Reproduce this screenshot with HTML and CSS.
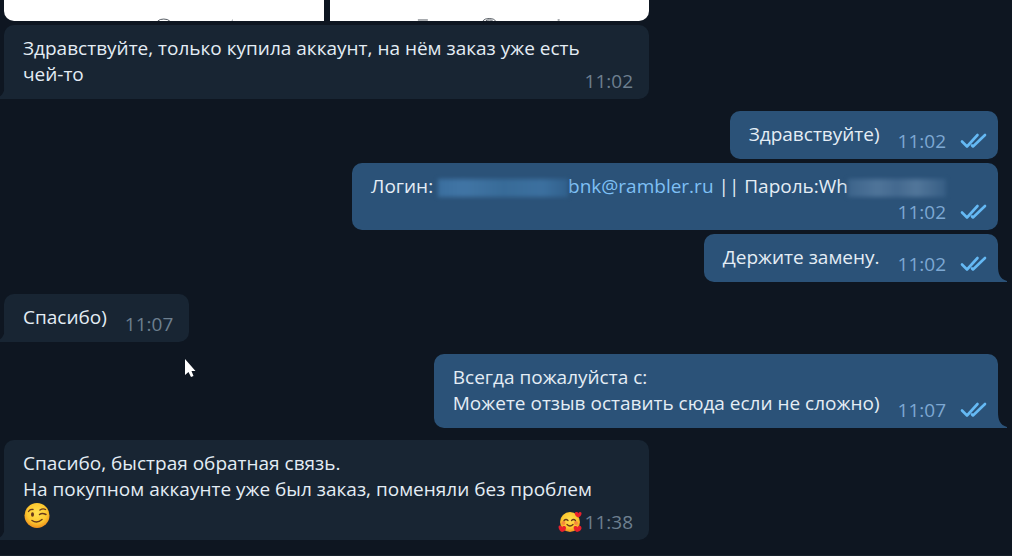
FILE: index.html
```html
<!DOCTYPE html>
<html lang="ru">
<head>
<meta charset="utf-8">
<meta name="viewport" content="width=device-width, initial-scale=1">
<title>Чат</title>
<link rel="stylesheet" href="styles.css">
</head>
<body>
<svg class="defs" aria-hidden="true">
  <defs>
    <symbol id="read" viewBox="0 0 28 16">
      <path d="M2 8.500l5 5L17.500 2M12 12.500l1 1L25 2" fill="none" stroke="#65b9f4" stroke-width="2.6" stroke-linecap="round" stroke-linejoin="round"/>
    </symbol>
    <symbol id="tail" viewBox="0 0 9 16">
      <path d="M0 0C0 8 2 13 9 15V16H0Z" fill="currentColor"/>
    </symbol>
    <radialGradient id="face" cx=".5" cy=".4" r=".6">
      <stop offset="0" stop-color="#ffe050"/>
      <stop offset=".65" stop-color="#fdc82f"/>
      <stop offset="1" stop-color="#ee8f1c"/>
    </radialGradient>
  </defs>
</svg>
<main class="chat">
  <div class="album">
    <div class="photo">
      <svg viewBox="0 0 320 21" class="sliver"><path d="M154 21a7 4 0 0 1 12 0M228 21l1-1" /></svg>
    </div>
    <div class="photo photo-last">
      <svg viewBox="0 0 320 21" class="sliver"><path d="M88 20h10M153 21a7 4 0 0 1 13 0M156 21a4 2 0 0 1 7 0M228 20h2" /></svg>
    </div>
  </div>

  <article class="bubble in wide tailed">
    <p class="text">Здравствуйте, только купила аккаунт, на нём заказ уже есть чей-то</p>
    <div class="meta"><time>11:02</time></div>
    <svg class="tail"><use href="#tail"/></svg>
  </article>

  <article class="bubble out group-start">
    <p class="text">Здравствуйте)</p>
    <div class="meta"><time>11:02</time><svg class="read"><use href="#read"/></svg></div>
  </article>
  <article class="bubble out stacked">
    <p class="text">Логин: <a href="#mail"><span class="hidden-login"></span>bnk@rambler.ru</a> || Пароль:Wh<span class="hidden-pass"></span></p>
    <div class="meta"><time>11:02</time><svg class="read"><use href="#read"/></svg></div>
  </article>
  <article class="bubble out tailed">
    <p class="text">Держите замену.</p>
    <div class="meta"><time>11:02</time><svg class="read"><use href="#read"/></svg></div>
    <svg class="tail"><use href="#tail"/></svg>
  </article>

  <article class="bubble in group-start tailed">
    <p class="text">Спасибо)</p>
    <div class="meta"><time>11:07</time></div>
    <svg class="tail"><use href="#tail"/></svg>
  </article>

  <article class="bubble out group-start tailed">
    <p class="text">Всегда пожалуйста с:<br>Можете отзыв оставить сюда если не сложно)</p>
    <div class="meta"><time>11:07</time><svg class="read"><use href="#read"/></svg></div>
    <svg class="tail"><use href="#tail"/></svg>
  </article>

  <article class="bubble in wide group-start tailed">
    <p class="text">Спасибо, быстрая обратная связь.<br>На покупном аккаунте уже был заказ, поменяли без проблем
      <svg class="wink" viewBox="0 0 26 26" role="img" aria-label="Подмигивание">
        <circle cx="13" cy="13.500" r="12.5" fill="url(#face)"/>
        <ellipse cx="8.5" cy="12.500" rx="1.5" ry="2.2" fill="#68391b"/>
        <path d="M4.500 9.500Q6 7 9 7.500M16 8Q19 6 21.500 7.500M15.500 12.500Q18 10.500 22 12.500M8 18.500Q13 22 18 17.500" fill="none" stroke="#68391b" stroke-width="1.400" stroke-linecap="round"/>
      </svg>
    </p>
    <div class="meta">
      <svg class="love" viewBox="0 0 24 22" role="img" aria-label="Влюблённое лицо">
        <circle cx="12" cy="11" r="10" fill="url(#face)"/>
        <circle cx="5.500" cy="12" r="2" fill="#f58a3c"/><circle cx="18" cy="12" r="2" fill="#f58a3c"/>
        <path d="M6 9.500q2-2 4 0M13.500 9.500q2-2 4 0M9 13.500q3 3 6 0" fill="none" stroke="#68391b" stroke-width="1.300" stroke-linecap="round"/>
        <g fill="#e9202c">
          <path d="M4 21C0 19 0 14.500 1.500 14.500S4 15.500 4 16.500C5 14.500 8 14.500 8 17S6 20.500 4 21Z"/>
          <path d="M19 21C15 19 15 15 17 15S19 15.500 19.500 16.500C20.500 14 23.500 14.500 23.500 17S21 20.500 19 21Z"/>
          <path d="M20 6.500C16.500 5 16 1 18 1S20 1.500 20.300 2.500C21.500 0 24 1 23.500 3S22 6 20 6.500Z"/>
        </g>
      </svg>
      <time>11:38</time>
    </div>
    <svg class="tail"><use href="#tail"/></svg>
  </article>
</main>
<svg class="cursor" viewBox="0 0 12 20" aria-hidden="true"><path d="M1 1V17L4.500 14L7 19L9.500 18L7.500 13H11.500Z" fill="#fff"/></svg>
</body>
</html>
```
FILE: styles.css
```css
* { box-sizing: border-box; }
body {
  margin: 0;
  overflow: hidden;
  background: #0e1621;
  color: #e4edf5;
  font: 19px/26px "Open Sans", "Noto Sans", sans-serif;
}
.defs { position: absolute; width: 0; height: 0; }
.chat {
  display: flex;
  flex-direction: column;
  align-items: flex-start;
  gap: 4px;
  padding: 0 14px 15px 4px;
  border-bottom: 2px solid #17212b;
}
.album { display: grid; grid-template-columns: 1fr 1fr; gap: 6px; width: 100%; max-width: 645px; }
.photo { height: 21px; background: #fff; border-radius: 0 0 0 10px; overflow: hidden; }
.photo-last { border-radius: 0 0 10px 0; }
.sliver { display: block; width: 100%; height: 21px; fill: none; stroke: #555b62; stroke-width: 1; }

.bubble {
  position: relative;
  display: flex;
  align-items: flex-end;
  gap: 18px;
  max-width: 100%;
  padding: 10px 16px 5px 19px;
  border-radius: 10px;
}
.group-start { margin-top: 8px; }
.in { background: #182533; }
.out { align-self: flex-end; padding-right: 10px; background: #2b5278; }
.text { margin: 0; padding-bottom: 7px; }
.text a { color: #7fc0f5; text-decoration: none; }
.meta { display: flex; align-items: center; line-height: 26px; color: #6d7f8f; }
.out .meta { color: #7da8d3; }

.wide { display: grid; width: 100%; max-width: 645px; }
.wide .text { grid-area: 1 / 1; padding-right: 16px; }
.wide .meta { grid-area: 1 / 1; align-self: end; justify-self: end; }
.stacked { flex-direction: column; gap: 0; }
.stacked .text { align-self: flex-start; padding: 0 42px 0 0; }

.read { width: 28px; height: 16px; margin-left: 14px; }
.tail { position: absolute; bottom: 0; width: 9px; height: 16px; }
.in .tail { left: -8px; color: #182533; transform: scaleX(-1); }
.out .tail { right: -9px; color: #2b5278; }
.in.tailed { border-bottom-left-radius: 0; }
.out.tailed { border-bottom-right-radius: 0; }

.hidden-login, .hidden-pass { display: inline-block; height: 18px; vertical-align: -4px; filter: blur(2px); }
.hidden-login { width: 130px; background: linear-gradient(90deg, #3b6f9f, #4175a5 20%, #386b98 50%, #3c709f 80%, #31608c); }
.hidden-pass { width: 98px; background: linear-gradient(90deg, #3d648b, #4f7499 30%, #44698f 50%, #52769a 70%, #365d84); }

.wink { display: inline-block; width: 26px; height: 26px; margin-left: 1px; vertical-align: top; }
.love { width: 24px; height: 22px; margin-right: 3px; }
.cursor { position: absolute; left: 184px; top: 358px; width: 12px; height: 20px; }
```
